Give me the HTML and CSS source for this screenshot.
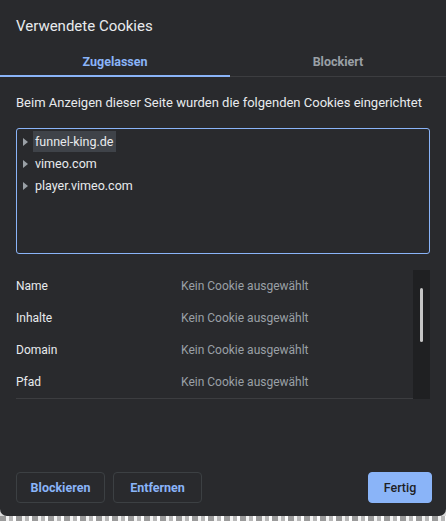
FILE: index.html
```html
<!DOCTYPE html>
<html lang="de">
<head>
<meta charset="utf-8">
<title>Verwendete Cookies</title>
<link rel="stylesheet" href="styles.css">
</head>
<body>
<div class="dialog">
  <h1 class="title">Verwendete Cookies</h1>
  <div class="tabs">
    <div class="tab active">Zugelassen</div>
    <div class="tab">Blockiert</div>
  </div>
  <p class="desc">Beim Anzeigen dieser Seite wurden die folgenden Cookies eingerichtet</p>
  <div class="tree">
    <div class="node"><span class="caret"></span><span class="label selected">funnel-king.de</span></div>
    <div class="node"><span class="caret"></span><span class="label">vimeo.com</span></div>
    <div class="node"><span class="caret"></span><span class="label">player.vimeo.com</span></div>
  </div>
  <div class="details">
    <div class="rows">
      <div class="row"><span class="key">Name</span><span class="val">Kein Cookie ausgewählt</span></div>
      <div class="row"><span class="key">Inhalte</span><span class="val">Kein Cookie ausgewählt</span></div>
      <div class="row"><span class="key">Domain</span><span class="val">Kein Cookie ausgewählt</span></div>
      <div class="row"><span class="key">Pfad</span><span class="val">Kein Cookie ausgewählt</span></div>
    </div>
    <div class="scrollbar"><div class="thumb"></div></div>
  </div>
  <div class="footer">
    <button class="btn">Blockieren</button>
    <button class="btn">Entfernen</button>
    <button class="btn primary">Fertig</button>
  </div>
</div>
<div class="page-strip"></div>
</body>
</html>
```

FILE: styles.css
```css
html, body {
  margin: 0;
  padding: 0;
}
body {
  width: 446px;
  height: 521px;
  overflow: hidden;
  background: #dcdcdc;
  font-family: Roboto, "Noto Sans", sans-serif;
  color: #e8eaed;
}
.dialog {
  height: 516px;
  box-sizing: border-box;
  background: #292a2d;
  border-radius: 0 0 7px 7px;
  display: flex;
  flex-direction: column;
}
.title {
  margin: 0;
  padding: 16px 16px 0;
  font-size: 15px;
  font-weight: 400;
  line-height: 20px;
  color: #e8eaed;
}
.tabs {
  margin-top: 10px;
  display: grid;
  grid-template-columns: 230px 1fr;
  border-bottom: 1px solid #3c3d40;
}
.tab {
  height: 30px;
  display: flex;
  align-items: center;
  justify-content: center;
  font-size: 12.5px;
  font-weight: 700;
  color: #9aa0a6;
}
.tab.active {
  color: #8ab4f8;
  box-sizing: border-box;
  border-bottom: 2px solid #8ab4f8;
  margin-bottom: -1px;
  height: 31px;
  padding-top: 2px;
}
.desc {
  margin: 17px 16px 0;
  font-size: 13px;
  line-height: 18px;
  color: #e8eaed;
  white-space: nowrap;
}
.tree {
  margin: 16px 16px 0;
  height: 126px;
  box-sizing: border-box;
  border: 1.5px solid #8ab4f8;
  border-radius: 3px;
  padding-top: 1.5px;
}
.node {
  height: 22px;
  display: flex;
  align-items: center;
  font-size: 12.5px;
}
.caret {
  width: 0;
  height: 0;
  margin-left: 6px;
  margin-right: 5px;
  border-top: 4px solid transparent;
  border-bottom: 4px solid transparent;
  border-left: 5px solid #9aa0a6;
}
.label {
  padding: 0 3px 0 2px;
  line-height: 21px;
}
.label.selected {
  background: #3f4349;
}
.details {
  margin: 16px 16px 0;
  height: 129px;
  display: flex;
}
.rows {
  flex: 1;
  border-bottom: 1px solid #3c3d40;
}
.row {
  height: 32px;
  display: flex;
  align-items: center;
  font-size: 12px;
}
.key {
  width: 165px;
  color: #e8eaed;
}
.val {
  color: #9aa0a6;
}
.scrollbar {
  width: 17px;
  background: #1f2022;
  position: relative;
}
.thumb {
  position: absolute;
  left: 7px;
  top: 18px;
  width: 3px;
  height: 54px;
  border-radius: 2px;
  background: #c4c4c4;
}
.footer {
  margin-top: auto;
  padding: 0 14px 13px 16px;
  display: flex;
  gap: 8px;
}
.btn {
  height: 31px;
  width: 89px;
  box-sizing: border-box;
  border: 1px solid #3c4043;
  border-radius: 4px;
  background: transparent;
  color: #8ab4f8;
  font-family: inherit;
  font-size: 12.5px;
  font-weight: 700;
  padding: 0;
}
.btn.primary {
  margin-left: auto;
  width: 64px;
  background: #8ab4f8;
  border-color: #8ab4f8;
  color: #202124;
  font-weight: 500;
}
.page-strip {
  height: 5px;
  background:
    repeating-linear-gradient(90deg, #9a9a9a 0 6px, #f2f2f2 6px 9px, #b8b8b8 9px 13px, #ffffff 13px 16px);
}
```
